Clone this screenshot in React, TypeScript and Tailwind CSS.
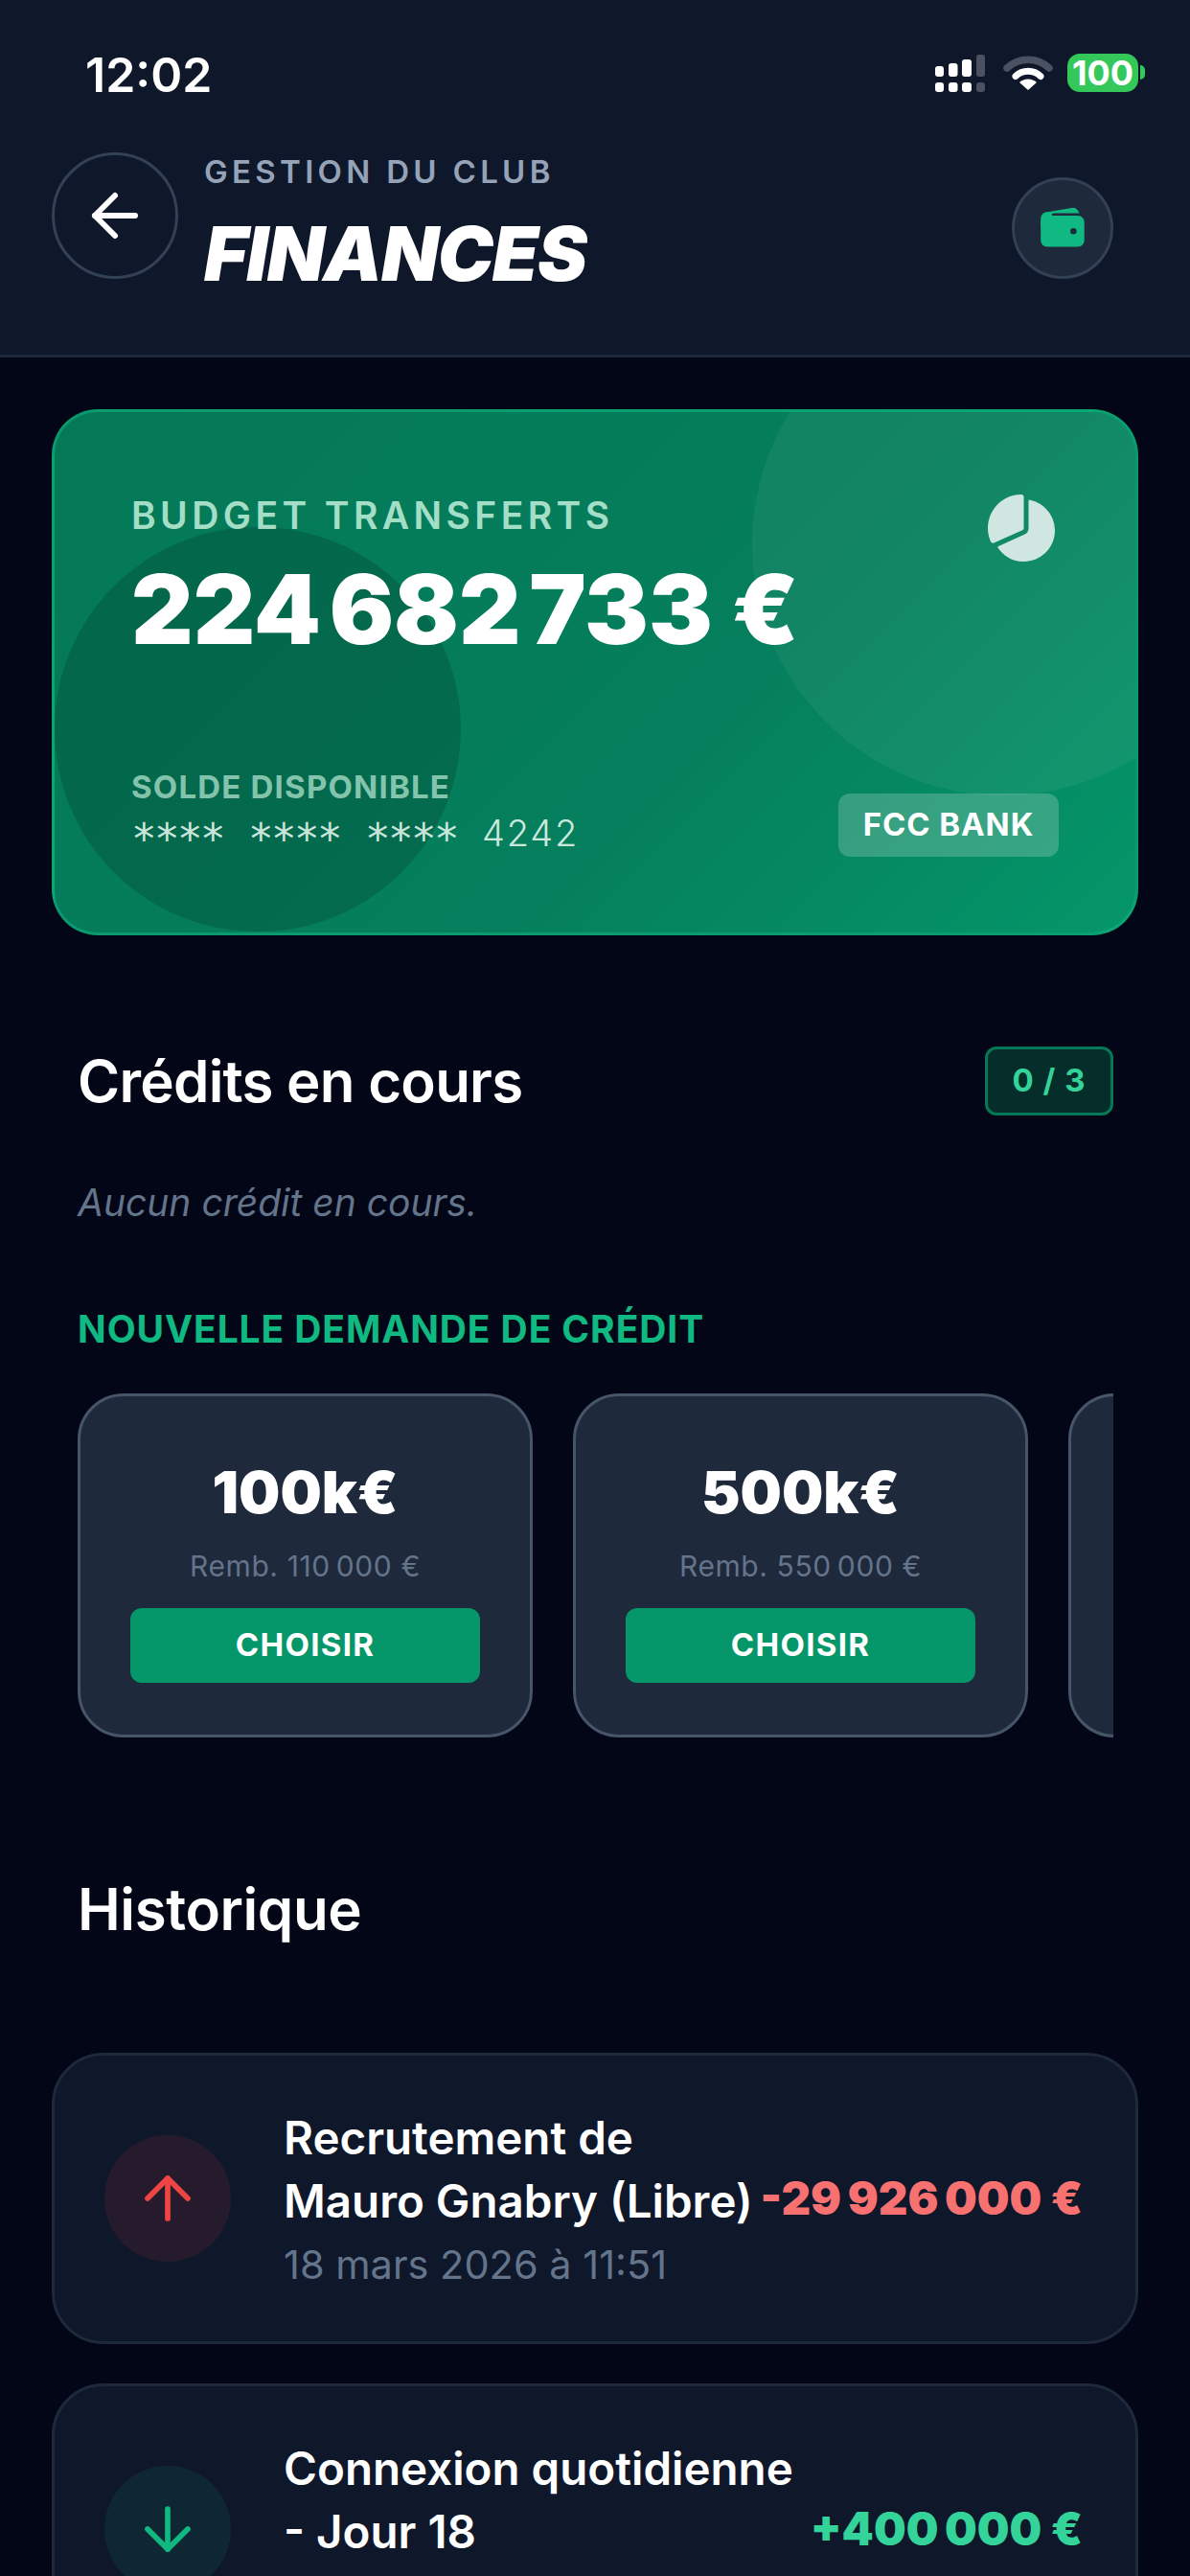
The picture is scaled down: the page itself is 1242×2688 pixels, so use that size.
import { ArrowDown, ArrowLeft, ArrowUp } from "lucide-react";
import { IoPieChart, IoWallet } from "react-icons/io5";

function StatusIcons() {
  return (
    <div className="flex items-start">
      {/* dual-SIM signal */}
      <svg width="54" height="40" viewBox="0 0 54 40" className="mt-[1px]">
        <g fill="#fff">
          <rect x="0" y="12" width="9" height="11" rx="3" />
          <rect x="14" y="9" width="9.5" height="14" rx="3" />
          <rect x="28" y="5" width="10" height="18" rx="3" />
          <rect x="0" y="29" width="9" height="10" rx="3" />
          <rect x="14" y="29" width="9.5" height="10" rx="3" />
          <rect x="28" y="29" width="10" height="10" rx="3" />
        </g>
        <g fill="#4a5160">
          <rect x="43" y="0" width="9" height="23" rx="3" />
          <rect x="43" y="29" width="9" height="10" rx="3" />
        </g>
      </svg>
      {/* wifi */}
      <svg width="52" height="38" viewBox="0 0 52 38" className="ml-[17px] mt-[1px]">
        <path d="M4 14 A32 32 0 0 1 48 14" fill="none" stroke="#4a5160" strokeWidth="7.5" strokeLinecap="round" />
        <path d="M13 22.5 A19 19 0 0 1 39 22.5" fill="none" stroke="#fff" strokeWidth="7" strokeLinecap="round" />
        <path d="M26 37 L17 29 A13 13 0 0 1 35 29 Z" fill="#fff" />
      </svg>
      {/* battery with percentage */}
      <div className="ml-[15px] flex h-[40px] w-[74px] items-center justify-center rounded-[13px] bg-[#34c759] text-[36px] leading-none font-bold text-white">
        100
      </div>
      <div className="ml-[2px] mt-[12px] h-[15px] w-[5px] rounded-r-full bg-[#34c759]" />
    </div>
  );
}

function MaskedGroup() {
  return <span className="w-[96px] translate-y-[7px] font-['DejaVu_Sans_Mono',monospace] text-[44px] leading-[46px] font-normal tracking-[-2.5px]">****</span>;
}

function CreditTile({ amount, refund }: { amount: string; refund: string }) {
  return (
    <div className="flex h-[359px] w-[475px] shrink-0 flex-col items-center rounded-[48px] border-[3px] border-[#475569] bg-[#1e293b] px-[52px] pt-[64px]">
      <div className="text-[61px] leading-[72px] font-black whitespace-nowrap text-white">{amount}</div>
      <div className="mt-[21px] text-[30px] leading-[40px] tracking-[0.6px] whitespace-nowrap text-[#64748b]">{refund}</div>
      <div className="mt-[24px] flex h-[78px] w-full items-center justify-center rounded-[12px] bg-[#059669] text-[33px] font-bold tracking-[1.3px] text-white">
        CHOISIR
      </div>
    </div>
  );
}

function HistoryRow({
  lines,
  date,
  amount,
  amountColor,
  tint,
  icon,
}: {
  lines: string[];
  date: string;
  amount: string;
  amountColor: string;
  tint: string;
  icon: React.ReactNode;
}) {
  return (
    <div className="flex h-[304px] shrink-0 items-center rounded-[54px] border-[3px] border-[#1e293b] bg-[#0f172a] pr-[55px] pl-[52px]">
      <div className={`flex h-[132px] w-[132px] shrink-0 items-center justify-center rounded-full ${tint}`}>{icon}</div>
      <div className="ml-[55px] min-w-0 flex-1 pt-[5px]">
        {lines.map((l) => (
          <div key={l} className="text-[47.5px] leading-[66px] font-semibold whitespace-nowrap text-white">
            {l}
          </div>
        ))}
        <div className="text-[41.5px] leading-[66px] text-[#64748b]">{date}</div>
      </div>
      <div className={`shrink-0 text-[47.5px] leading-[60px] font-black whitespace-nowrap ${amountColor}`}>{amount}</div>
    </div>
  );
}

export default function App() {
  return (
    <div className="flex h-[2688px] w-[1242px] flex-col overflow-hidden bg-[#020617] font-['Inter',sans-serif] text-white">
      <header className="h-[373px] shrink-0 border-b-[3px] border-[#1e293b] bg-[#0f172a] px-[54px] pt-[56px]">
        <div className="flex h-[103px] items-start justify-between">
          <div className="mt-[2px] pl-[35px] text-[50px] leading-[40px] font-semibold">12:02</div>
          <div className="mr-[-7px]">
            <StatusIcons />
          </div>
        </div>
        <div className="flex h-[132px] items-end justify-between pr-[26px]">
          <div className="flex items-start">
            <div className="flex h-[132px] w-[132px] items-center justify-center rounded-full border-[3px] border-[#334155]">
              <ArrowLeft size={72} strokeWidth={2} color="#fff" />
            </div>
            <div className="ml-[27px]">
              <div className="text-[33px] leading-[40px] font-semibold tracking-[4.3px] text-[#94a3b8]">GESTION DU CLUB</div>
              <div className="mt-[40px] text-[78px] leading-[52px] font-black tracking-[-1.3px] italic">FINANCES</div>
            </div>
          </div>
          <div className="flex h-[106px] w-[106px] items-center justify-center rounded-full border-[3px] border-[#334155] bg-[#1e293b]">
            <IoWallet size={52} color="#10b981" />
          </div>
        </div>
      </header>

      <main className="flex flex-col px-[54px] pt-[54px]">
        <section className="relative h-[549px] shrink-0 overflow-hidden rounded-[48px] border-[3px] border-[#10b981]/50 bg-linear-[135deg] from-[#047857] via-[#057f5d] via-60% to-[#059669] px-[80px]">
          <div className="absolute top-[-124px] right-[-124px] h-[524px] w-[524px] rounded-full bg-white/5" />
          <div className="absolute bottom-[1px] left-0 h-[422px] w-[424px] rounded-full bg-black/15" />
          <div className="relative flex h-full flex-col">
            <div className="flex items-start justify-between">
              <div>
                <div className="mt-[85px] text-[39px] leading-[46px] font-semibold tracking-[4.4px] text-[#d1fae5]/80">BUDGET TRANSFERTS</div>
                <div className="mt-[20px] text-[100px] leading-[110px] font-black tracking-[-0.4px] whitespace-nowrap">
                  224&#8239;<span className="ml-[-5px]">682</span>&#8239;<span className="ml-[-5px]">733&nbsp;€</span>
                </div>
              </div>
              <div className="mt-[81px] mr-[-1px]">
                <IoPieChart size={80} color="#fff" className="opacity-80" />
              </div>
            </div>
            <div className="mt-[110px] flex items-start justify-between">
              <div>
                <div className="text-[33px] leading-[40px] font-bold tracking-[1.2px] text-[#d1fae5]/65">SOLDE DISPONIBLE</div>
                <div className="mt-[5px] flex gap-[26px] text-[38px] leading-[46px] font-light tracking-[1.8px] text-[#e5f7ee]/90">
                  <MaskedGroup />
                  <MaskedGroup />
                  <MaskedGroup />
                  <span>4242</span>
                </div>
              </div>
              <div className="mt-[27px] flex h-[66px] w-[230px] items-center justify-center rounded-[12px] bg-white/20 text-[33px] font-bold tracking-[0.9px]">
                FCC BANK
              </div>
            </div>
          </div>
        </section>

        <div className="mt-[116px] flex h-[72px] items-center justify-between pr-[26px] pl-[27px]">
          <h2 className="text-[60px] font-semibold tracking-[-0.75px]">Crédits en cours</h2>
          <div className="flex h-[72px] w-[134px] items-center justify-center rounded-[12px] border-[3px] border-[#047857] bg-[#052e2b] text-[33px] font-bold tracking-[1px] text-[#34d399]">
            0 / 3
          </div>
        </div>
        <p className="mt-[67px] pl-[27px] text-[39px] leading-[48px] text-[#64748b] italic">Aucun crédit en cours.</p>
        <h3 className="mt-[84px] pl-[27px] text-[39px] leading-[48px] font-bold tracking-[0.9px] text-[#10b981]">NOUVELLE DEMANDE DE CRÉDIT</h3>

        <div className="mt-[43px] mr-[26px] ml-[27px] flex gap-[42px] overflow-hidden">
          <CreditTile amount="100k€" refund="Remb. 110&#8239;000 €" />
          <CreditTile amount="500k€" refund="Remb. 550&#8239;000 €" />
          {/* next tile peeking in from the scroller's edge */}
          <div className="h-[359px] w-[475px] shrink-0 rounded-[48px] border-[3px] border-[#475569] bg-[#1e293b]" />
        </div>

        <h2 className="mt-[143px] pl-[27px] text-[60px] leading-[72px] font-semibold tracking-[-0.4px]">Historique</h2>

        <div className="mt-[114px] flex flex-col gap-[41px]">
          <HistoryRow
            lines={["Recrutement de", "Mauro Gnabry (Libre)"]}
            date="18 mars 2026 à 11:51"
            amount="-29&#8239;926&#8239;000&nbsp;€"
            amountColor="text-[#f87171]"
            tint="bg-[#ef4444]/10"
            icon={<ArrowUp size={72} strokeWidth={1.9} color="#ef4444" />}
          />
          <HistoryRow
            lines={["Connexion quotidienne", "- Jour 18"]}
            date="18 mars 2026 à 11:50"
            amount="+400&#8239;000&nbsp;€"
            amountColor="text-[#34d399]"
            tint="bg-[#10b981]/10"
            icon={<ArrowDown size={72} strokeWidth={1.9} color="#10b981" />}
          />
        </div>
      </main>
    </div>
  );
}
